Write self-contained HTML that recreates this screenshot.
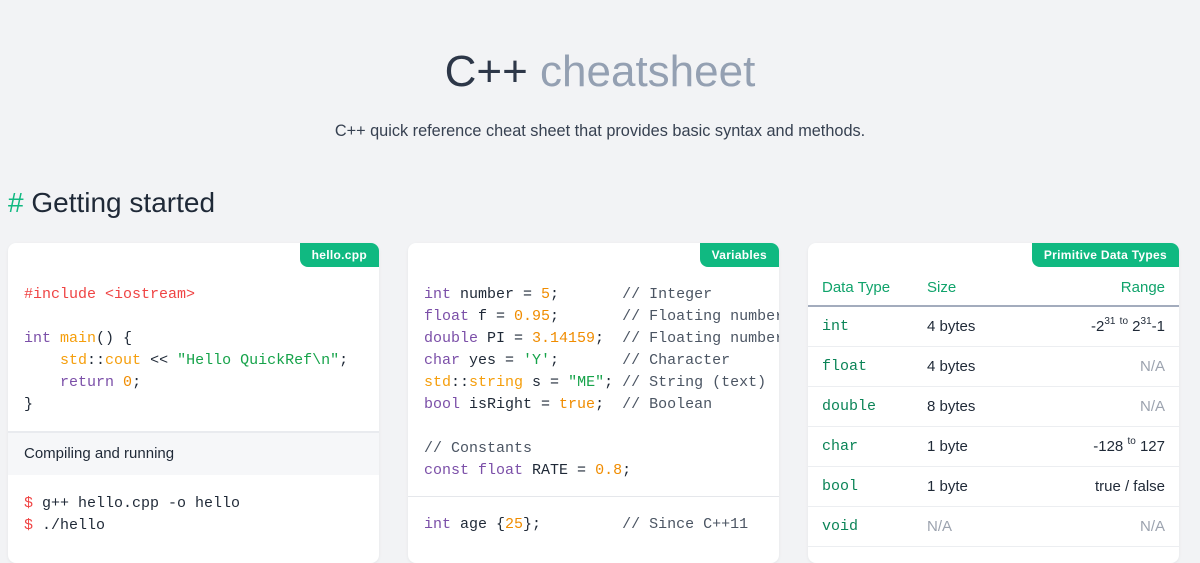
<!DOCTYPE html>
<html><head><meta charset="utf-8"><style>
*{box-sizing:border-box;margin:0;padding:0}
body{width:1200px;height:539px;overflow:hidden;background:#f2f3f5;font-family:"Liberation Sans",sans-serif;color:#1f2937;position:relative}
h1{position:absolute;top:44px;left:0;width:1200px;text-align:center;font-size:44px;font-weight:normal;color:#2d3748;line-height:56px}
h1 span{color:#94a0b2}
.sub{position:absolute;top:121px;left:0;width:1200px;text-align:center;font-size:16.3px;color:#374151;line-height:20px}
h2{position:absolute;top:185px;left:8px;font-size:28px;font-weight:normal;color:#1f2937;line-height:36px}
h2 b{color:#10b981;font-weight:normal}
.card{position:absolute;top:243px;width:371px;height:320px;background:#fff;border-radius:8px;overflow:hidden;box-shadow:0 1px 3px rgba(0,0,0,.06)}
.tag{position:absolute;top:0;right:0;background:#10b981;color:#fff;font-size:12px;font-weight:bold;padding:0 12px;height:24px;line-height:24px;border-radius:0 0 0 8px;letter-spacing:.3px}
pre{font-family:"Liberation Mono",monospace;font-size:15px;line-height:22px;color:#1f2937;white-space:pre;position:absolute;left:16px}
.k{color:#7b4fa8}.f{color:#f59e0b}.n{color:#f08c00}.s{color:#16a34a}.r{color:#ef4444}.c{color:#4b5563}
.sep{position:absolute;left:0;right:0;height:1px;background:#e5e7eb}
.band{position:absolute;left:0;right:0;top:188px;height:44px;background:#f6f7f9;border-top:2px solid #e9ebef;font-size:15px;line-height:42px;padding-left:16px;color:#1f2937}
table{position:absolute;top:26px;left:0;width:371px;border-collapse:collapse;font-size:15px}
td,th{height:40px;padding:0 14px;text-align:left;font-weight:normal;border-bottom:1px solid #eceef1}
th{color:#10a36b;height:37px;border-bottom:2px solid #a3acbd}
td.m{font-family:"Liberation Mono",monospace;color:#0b8457}
.rt{text-align:right}
.g{color:#9ca3af}
sup{font-size:10px;line-height:0;vertical-align:7px}
</style></head><body>
<h1>C++ <span>cheatsheet</span></h1>
<div class="sub">C++ quick reference cheat sheet that provides basic syntax and methods.</div>
<h2><b>#</b> Getting started</h2>

<div class="card" style="left:8px">
<div class="tag">hello.cpp</div>
<pre style="top:41px"><span class="r">#include &lt;iostream&gt;</span>

<span class="k">int</span> <span class="f">main</span>() {
    <span class="f">std</span>::<span class="f">cout</span> &lt;&lt; <span class="s">"Hello QuickRef\n"</span>;
    <span class="k">return</span> <span class="n">0</span>;
}</pre>
<div class="band">Compiling and running</div>
<pre style="top:250px"><span class="r">$</span> g++ hello.cpp -o hello
<span class="r">$</span> ./hello</pre>
</div>

<div class="card" style="left:408px">
<div class="tag">Variables</div>
<pre style="top:41px"><span class="k">int</span> number = <span class="n">5</span>;       <span class="c">// Integer</span>
<span class="k">float</span> f = <span class="n">0.95</span>;       <span class="c">// Floating number</span>
<span class="k">double</span> PI = <span class="n">3.14159</span>;  <span class="c">// Floating number</span>
<span class="k">char</span> yes = <span class="s">'Y'</span>;       <span class="c">// Character</span>
<span class="f">std</span>::<span class="f">string</span> s = <span class="s">"ME"</span>; <span class="c">// String (text)</span>
<span class="k">bool</span> isRight = <span class="n">true</span>;  <span class="c">// Boolean</span>

<span class="c">// Constants</span>
<span class="k">const</span> <span class="k">float</span> RATE = <span class="n">0.8</span>;</pre>
<div class="sep" style="top:253px"></div>
<pre style="top:271px"><span class="k">int</span> age {<span class="n">25</span>};         <span class="c">// Since C++11</span></pre>
</div>

<div class="card" style="left:808px">
<div class="tag">Primitive Data Types</div>
<table>
<tr><th style="width:105px">Data Type</th><th>Size</th><th class="rt">Range</th></tr>
<tr><td class="m">int</td><td>4 bytes</td><td class="rt">-2<sup>31</sup> <sup>to</sup> 2<sup>31</sup>-1</td></tr>
<tr><td class="m">float</td><td>4 bytes</td><td class="rt g">N/A</td></tr>
<tr><td class="m">double</td><td>8 bytes</td><td class="rt g">N/A</td></tr>
<tr><td class="m">char</td><td>1 byte</td><td class="rt">-128 <sup>to</sup> 127</td></tr>
<tr><td class="m">bool</td><td>1 byte</td><td class="rt">true / false</td></tr>
<tr><td class="m">void</td><td class="g">N/A</td><td class="rt g">N/A</td></tr>
</table>
</div>
</body></html>
